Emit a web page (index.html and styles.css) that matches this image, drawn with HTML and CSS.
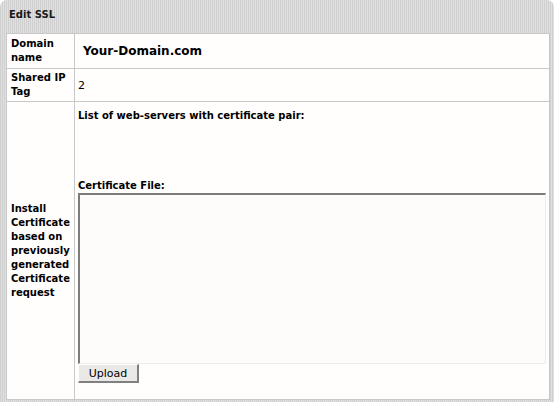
FILE: index.html
```html
<!DOCTYPE html>
<html lang="en">
<head>
    <meta charset="UTF-8">
    <title>Edit SSL</title>
    <link rel="stylesheet" href="styles.css">
</head>
<body>
    <div class="panel">
        <div class="panel-title">Edit SSL</div>
        <table class="form-table">
            <tr class="row-domain">
                <th>Domain name</th>
                <td><span class="domain">Your-Domain.com</span></td>
            </tr>
            <tr class="row-ip">
                <th>Shared IP Tag</th>
                <td>2</td>
            </tr>
            <tr class="row-cert">
                <th>Install Certificate based on previously generated Certificate request</th>
                <td>
                    <div class="field-label">List of web-servers with certificate pair:</div>
                    <div class="server-list"></div>
                    <div class="field-label">Certificate File:</div>
                    <textarea class="cert-file"></textarea>
                    <button class="upload">Upload</button>
                </td>
            </tr>
        </table>
    </div>
</body>
</html>
```

FILE: styles.css
```css
body {
    margin: 0;
    background-color: #ffffff;
    font-family: "DejaVu Sans", Verdana, sans-serif;
    font-size: 11px;
    color: #000000;
}
.panel {
    width: 543px;
    height: 402px;
    padding: 0 5px 0 6px;
    background-color: #d7d7d7;
    background-image: repeating-linear-gradient(90deg, #cfcfcf 0, #cfcfcf 1px, #e0e0e0 1px, #e0e0e0 2px);
    border-radius: 7px 7px 0 0;
    box-sizing: content-box;
}
.panel-title {
    height: 33px;
    padding: 8px 3px 0;
    box-sizing: border-box;
    font-size: 10px;
    font-weight: bold;
    line-height: 13px;
    color: #1a1a1a;
}
.form-table {
    width: 543px;
    border-collapse: collapse;
    background-color: #fffefd;
    border: 1px solid #c6c6c6;
}
.form-table th,
.form-table td {
    border: 1px solid #c8c8c8;
    text-align: left;
    line-height: 14px;
    padding: 0 3px;
}
.form-table th {
    width: 59px;
    padding: 0 4px;
    font-size: 10px;
    font-weight: bold;
}
.row-domain th,
.row-domain td {
    height: 34px;
}
.row-ip th,
.row-ip td {
    height: 30px;
}
.row-ip td {
    padding-top: 2px;
}
.row-cert td {
    vertical-align: top;
    padding-top: 7px;
    padding-bottom: 16px;
}
.domain {
    margin-left: 5px;
    font-size: 12px;
    font-weight: bold;
}
.field-label {
    font-size: 10px;
    font-weight: bold;
}
.server-list {
    height: 56px;
}
.cert-file {
    display: block;
    width: 468px;
    height: 171px;
    margin: 0;
    padding: 2px;
    box-sizing: border-box;
    background-color: #fdfcfa;
    border-top: 2px solid #7c7c7c;
    border-left: 2px solid #7c7c7c;
    border-right: 1px solid #f1ece8;
    border-bottom: 1px solid #f1ece8;
    resize: none;
}
.upload {
    display: block;
    width: 61px;
    height: 19px;
    margin: 0;
    padding: 0;
    font-family: "DejaVu Sans", Verdana, sans-serif;
    font-size: 11px;
    color: #000000;
    background-color: #ebe9e6;
    border-top: 1px solid #ffffff;
    border-left: 1px solid #ffffff;
    border-right: 2px solid #808080;
    border-bottom: 2px solid #808080;
}
```
